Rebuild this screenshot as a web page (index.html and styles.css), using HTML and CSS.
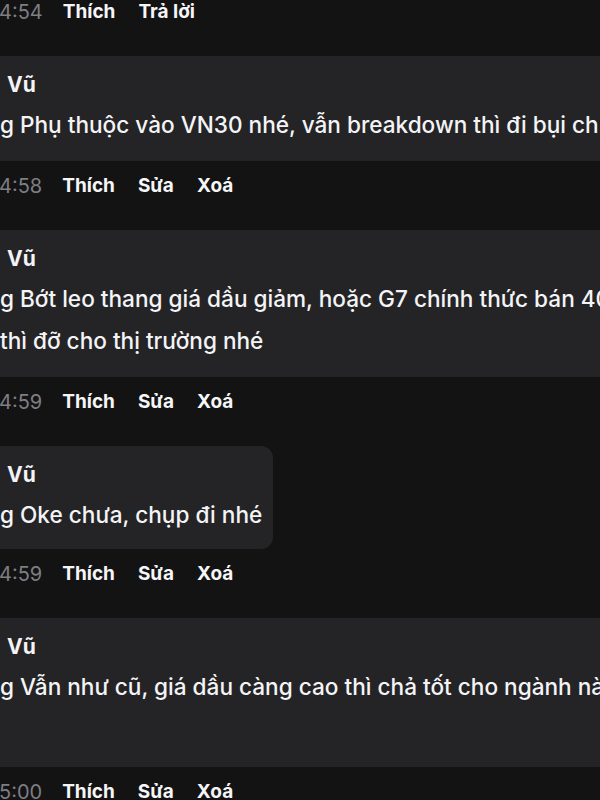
FILE: index.html
```html
<!DOCTYPE html>
<html lang="vi">
<head>
<meta charset="utf-8">
<title>Bình luận</title>
<link rel="stylesheet" href="styles.css">
</head>
<body>
<main class="thread">
  <div class="actions first">
    <span class="time">4:54</span>
    <span class="act">Thích</span>
    <span class="act">Trả lời</span>
  </div>

  <div class="bubble wide">
    <div class="name">Vũ</div>
    <div class="msg">g Phụ thuộc vào VN30 nhé, vẫn breakdown thì đi bụi ch</div>
  </div>
  <div class="actions">
    <span class="time">4:58</span>
    <span class="act">Thích</span>
    <span class="act">Sửa</span>
    <span class="act">Xoá</span>
  </div>

  <div class="bubble wide">
    <div class="name">Vũ</div>
    <div class="msg">g Bớt leo thang giá dầu giảm, hoặc G7 chính thức bán 40</div>
    <div class="msg">thì đỡ cho thị trường nhé</div>
  </div>
  <div class="actions">
    <span class="time">4:59</span>
    <span class="act">Thích</span>
    <span class="act">Sửa</span>
    <span class="act">Xoá</span>
  </div>

  <div class="bubble short">
    <div class="name">Vũ</div>
    <div class="msg">g Oke chưa, chụp đi nhé</div>
  </div>
  <div class="actions">
    <span class="time">4:59</span>
    <span class="act">Thích</span>
    <span class="act">Sửa</span>
    <span class="act">Xoá</span>
  </div>

  <div class="bubble wide tall">
    <div class="name">Vũ</div>
    <div class="msg">g Vẫn như cũ, giá dầu càng cao thì chả tốt cho ngành nà</div>
    <div class="msg blank"></div>
  </div>
  <div class="actions">
    <span class="time">5:00</span>
    <span class="act">Thích</span>
    <span class="act">Sửa</span>
    <span class="act">Xoá</span>
  </div>
</main>
</body>
</html>
```
FILE: styles.css
```css
html, body {
  margin: 0;
  padding: 0;
  background: #131313;
}
body {
  width: 600px;
  height: 800px;
  overflow: hidden;
  font-family: Inter, "Liberation Sans", sans-serif;
  color: #f4f4f6;
}
.thread {
  display: flex;
  flex-direction: column;
  align-items: flex-start;
  margin-left: -1px;
}
.actions {
  display: flex;
  gap: 23px;
  padding: 13px 0 32px 0;
  font-size: 19px;
  line-height: 24px;
}
.actions.first {
  padding-top: 0;
}
.time {
  color: #7e7e83;
  font-weight: 400;
  font-size: 20px;
  margin-right: -3px;
}
.act {
  font-weight: 700;
  color: #f6f6f8;
}
.bubble {
  background: #242426;
  border-radius: 12px;
  margin-left: -20px;
  padding: 10px 0 15px 21px;
  box-sizing: border-box;
}
.bubble.wide {
  width: 660px;
}
.bubble.short {
  width: 294px;
  padding-bottom: 13px;
}
.bubble.tall {
  padding-bottom: 17px;
}
.name {
  font-size: 21px;
  font-weight: 700;
  line-height: 38px;
  padding-left: 7px;
}
.msg {
  font-size: 22.6px;
  font-weight: 500;
  line-height: 42px;
  white-space: nowrap;
}
.msg.blank {
  height: 42px;
}
```
